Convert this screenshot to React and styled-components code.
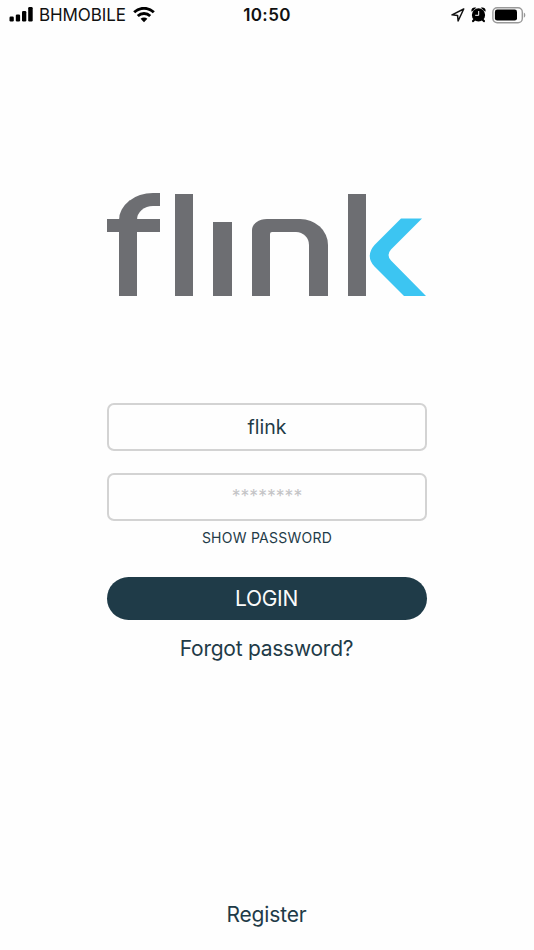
import React, { useState } from 'react'
import styled, { createGlobalStyle } from 'styled-components'

//#region  styled components
const GlobalStyle = createGlobalStyle`
  * {
    box-sizing: border-box;
  }
  body {
    margin: 0;
    background-color: #fefefe;
    font-family: Inter, 'Liberation Sans', sans-serif;
    color: #1f3b48;
  }
`
const StyledScreen = styled('div')`
  width: 534px;
  height: 950px;
  display: flex;
  flex-direction: column;
  align-items: center;
  overflow: hidden;
`
const StyledStatusBar = styled('div')`
  width: 100%;
  height: 30px;
  padding: 0 8px 0 9px;
  display: grid;
  grid-template-columns: 1fr auto 1fr;
  align-items: center;
  color: #111;
`
const StyledStatusGroup = styled('div')`
  display: flex;
  align-items: center;
  justify-content: ${props => (props.$end ? 'flex-end' : 'flex-start')};
  gap: ${props => props.$gap || 0}px;
  svg {
    display: block;
    flex: none;
  }
`
const StyledCarrier = styled('span')`
  margin: 0 7px 0 6px;
  font-size: 17px;
  line-height: 30px;
  letter-spacing: -0.08px;
`
const StyledTime = styled('span')`
  padding-right: 1px;
  font-size: 17px;
  font-weight: 600;
  line-height: 30px;
  letter-spacing: 0.4px;
`
const StyledLogo = styled('div')`
  width: 320px;
  height: 104px;
  margin-top: 162.3px;
  display: flex;
  align-items: flex-end;
  > * {
    flex: none;
  }
  svg {
    display: block;
    margin-left: 3px;
  }
`
const StyledHookMark = styled('div')`
  width: 53px;
  height: 103.5px;
  display: grid;
  grid-template: 26px 13px 1fr / 11.5px 1fr;
`
const StyledHook = styled('div')`
  grid-area: 1 / 2 / 4 / 3;
  border-left: 18px solid #6d6e72;
  border-top: 13px solid #6d6e72;
  border-top-left-radius: 34px 27px;
`
const StyledCrossbar = styled('div')`
  grid-area: 2 / 1 / 3 / 3;
  background-color: #6d6e72;
`
const StyledStem = styled('div')`
  width: 18.4px;
  height: ${props => props.$height}px;
  margin-left: ${props => props.$gap}px;
  background-color: #6d6e72;
`
const StyledArch = styled('div')`
  width: 76px;
  height: 77.5px;
  margin-left: 20.2px;
  background-color: #6d6e72;
  border-radius: 15px 28px 0 0 / 11px 26px 0 0;
  padding: 13px 18.5px 0 18.5px;
`
const StyledArchHole = styled('div')`
  height: 100%;
  background-color: #fefefe;
  border-radius: 2px 13px 0 0;
`
const StyledForm = styled('form')`
  width: 320px;
  margin-top: 106.7px;
  display: flex;
  flex-direction: column;
  align-items: center;
`
const StyledInput = styled('input')`
  width: 100%;
  height: 48px;
  margin-bottom: ${props => props.$gap}px;
  padding: ${props => props.$padding};
  border: 2px solid #d3d3d3;
  border-radius: 7px;
  outline: none;
  background-color: #fefefe;
  color: #1f3b48;
  font-family: inherit;
  font-size: 19.5px;
  text-align: center;
  &::placeholder {
    color: #c4c4c6;
    font-size: 17.6px;
    opacity: 1;
  }
`
const StyledTextButton = styled('button')`
  margin: ${props => props.$margin || 0};
  padding: 0;
  border: none;
  background: none;
  color: #1f3b48;
  font-family: inherit;
  font-size: ${props => props.$size}px;
  line-height: ${props => props.$line}px;
  letter-spacing: ${props => props.$spacing || 0}px;
  cursor: pointer;
`
const StyledLoginButton = styled('button')`
  width: 100%;
  height: 43px;
  margin-top: 29px;
  padding: 0 1px 0 0;
  border: none;
  border-radius: 22px;
  background-color: #1f3b48;
  color: #fafafa;
  font-family: inherit;
  font-size: 21px;
  letter-spacing: -0.3px;
  cursor: pointer;
`
const StyledFooter = styled('div')`
  margin-top: auto;
  padding: 0 1px 20px 0;
`
//#endregion

const SignalIcon = () => (
  <svg width="24" height="16" viewBox="0 0 24 16" fill="#000">
    <rect x="0.5" y="9.5" width="4.3" height="5" rx="1.2" />
    <rect x="6.8" y="7.5" width="4.3" height="7" rx="1.2" />
    <rect x="13" y="4" width="4.3" height="10.5" rx="1.2" />
    <rect x="19.2" y="0" width="4.5" height="14.5" rx="1.2" />
  </svg>
)

const WifiIcon = () => (
  <svg width="22" height="16" viewBox="0 0 22 16" fill="none" stroke="#000" strokeWidth="2.9">
    <path d="M1.2 5.3a14 14 0 0 1 19.6 0" />
    <path d="M4.8 9a9 9 0 0 1 12.4 0" />
    <path d="M11 15.2 7.6 11.8a4.9 4.9 0 0 1 6.8 0Z" fill="#000" stroke="none" />
  </svg>
)

const LocationIcon = () => (
  <svg width="14" height="14" viewBox="0 0 14 14" fill="none" stroke="#111" strokeWidth="1.5" strokeLinejoin="round">
    <path d="M12.7 1 1 6.8l5.6.6.5 5.6Z" />
  </svg>
)

const AlarmIcon = () => (
  <svg width="15" height="16" viewBox="0 0 15 16">
    <circle cx="7.5" cy="7.9" r="6.6" fill="#000" />
    <path d="M.7 4.8C-.5 2 2-.3 5.2.7ZM14.3 4.8C15.5 2 13-.3 9.8.7Z" fill="#000" />
    <path d="m3.3 12.8-1.2 1.3M11.7 12.8l1.2 1.3" stroke="#000" strokeWidth="2.2" strokeLinecap="round" />
    <path d="M7.7 4v4.3H4.2" fill="none" stroke="#fff" strokeWidth="1" />
  </svg>
)

const BatteryIcon = () => (
  <svg width="34" height="17" viewBox="0 0 34 17">
    <rect x="0.9" y="0.7" width="29.4" height="15.1" rx="4.3" fill="none" stroke="#999" strokeWidth="1.4" />
    <rect x="2.9" y="2.6" width="22.1" height="11" rx="2.3" fill="#000" />
    <path d="M31.8 5.5c2 .8 2 4.5 0 5.3Z" fill="#999" />
  </svg>
)

const Logo = () => (
  <StyledLogo role="img" aria-label="flink">
    <StyledHookMark>
      <StyledHook />
      <StyledCrossbar />
    </StyledHookMark>
    <StyledStem $height={102.5} $gap={14.9} />
    <StyledStem $height={74.5} $gap={20} />
    <StyledArch>
      <StyledArchHole />
    </StyledArch>
    <StyledStem $height={102.5} $gap={20} />
    <svg width="57" height="78" viewBox="0 0 57 78">
      <path
        d="M32 .5H53L22 31.5Q17 37 22 42.5L57 78H35L5.5 48.5Q-4 38 5.5 27Z"
        fill="#3cc5f2"
      />
    </svg>
  </StyledLogo>
)

const App = () => {
  const [username, setUsername] = useState('flink')
  const [password, setPassword] = useState('')
  const [visible, setVisible] = useState(false)

  return (
    <StyledScreen>
      <GlobalStyle />
      <StyledStatusBar>
        <StyledStatusGroup>
          <SignalIcon />
          <StyledCarrier>BHMOBILE</StyledCarrier>
          <WifiIcon />
        </StyledStatusGroup>
        <StyledTime>10:50</StyledTime>
        <StyledStatusGroup $end $gap={6}>
          <LocationIcon />
          <AlarmIcon />
          <BatteryIcon />
        </StyledStatusGroup>
      </StyledStatusBar>
      <Logo />
      <StyledForm onSubmit={e => e.preventDefault()}>
        <StyledInput
          value={username}
          onChange={e => setUsername(e.target.value)}
          $gap={22}
          $padding="1px 0 0"
        />
        <StyledInput
          type={visible ? 'text' : 'password'}
          placeholder="********"
          value={password}
          onChange={e => setPassword(e.target.value)}
          $gap={7}
          $padding="0 0 3px"
        />
        <StyledTextButton
          type="button"
          onClick={() => setVisible(!visible)}
          $size={14}
          $line={20}
          $spacing={0.25}
        >
          SHOW PASSWORD
        </StyledTextButton>
        <StyledLoginButton type="submit">LOGIN</StyledLoginButton>
        <StyledTextButton
          type="button"
          $size={21}
          $line={30}
          $spacing={-0.25}
          $margin="14.5px 1px 0 0"
        >
          Forgot password?
        </StyledTextButton>
      </StyledForm>
      <StyledFooter>
        <StyledTextButton type="button" $size={21} $line={30} $spacing={-0.15}>
          Register
        </StyledTextButton>
      </StyledFooter>
    </StyledScreen>
  )
}

export default App
